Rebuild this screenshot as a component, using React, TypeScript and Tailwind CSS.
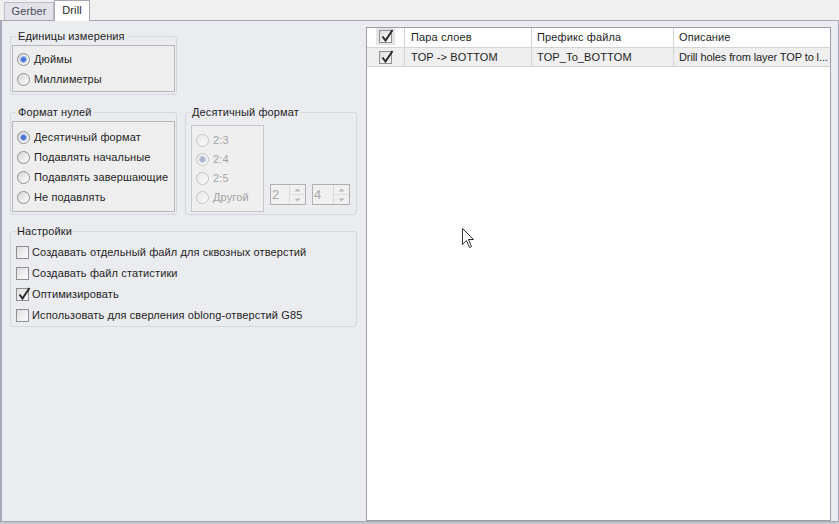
import React from "react";

function Radio({ checked, disabled, label, h }: { checked?: boolean; disabled?: boolean; label: string; h: string }) {
  return (
    <div className={`flex items-center ${h}`}>
      <div
        className={`w-[13px] h-[13px] rounded-full border flex items-center justify-center ${
          disabled
            ? "border-[#c4c4c4] bg-gradient-to-br from-[#e8e8e8] to-[#fbfbfb]"
            : "border-[#8e8f94] bg-gradient-to-br from-[#d6d6d6] to-[#ffffff]"
        }`}
      >
        {checked && (
          <div
            className={`w-[7px] h-[7px] rounded-full ${
              disabled ? "bg-[#a9b4d0] border border-[#c6cde0]" : "bg-[#4a72d4] border border-[#a8bdee]"
            }`}
          />
        )}
      </div>
      <span className={`ml-[4px] ${disabled ? "text-[#a3a3a3]" : "text-[#1e1e1e]"}`}>{label}</span>
    </div>
  );
}

function Check({ checked }: { checked?: boolean }) {
  return (
    <div className="relative w-[13px] h-[13px] border border-[#8e8f94] bg-gradient-to-br from-[#dcdcdc] to-[#ffffff] flex-none">
      {checked && (
        <svg className="absolute left-[1px] top-[-2px]" width="13" height="14" viewBox="0 0 13 14">
          <path d="M1.5 7.5 L4.5 11.5 L11.5 1" fill="none" stroke="#2a2a2a" strokeWidth="2" />
        </svg>
      )}
    </div>
  );
}

function CheckRow({ checked, label }: { checked?: boolean; label: string }) {
  return (
    <div className="flex items-center h-[21px]">
      <Check checked={checked} />
      <span className="ml-[3px]">{label}</span>
    </div>
  );
}

function Spinner({ value, w }: { value: string; w: string }) {
  return (
    <div className={`flex ${w} h-[21px] border border-[#b0b0b0] bg-[#f0f0f0]`}>
      <div className="flex-1 pl-[1px] flex items-center text-[13px] text-[#a8a8a8]">{value}</div>
      <div className="w-[16px] flex flex-col border-l border-[#dadada]">
        <div className="flex-1 flex items-center justify-center border-b border-[#dadada]">
          <svg width="7" height="4" viewBox="0 0 7 4">
            <path d="M0.5 3.5 L3.5 0.5 L6.5 3.5 Z" fill="#b8b8b8" />
          </svg>
        </div>
        <div className="flex-1 flex items-center justify-center">
          <svg width="7" height="4" viewBox="0 0 7 4">
            <path d="M0.5 0.5 L3.5 3.5 L6.5 0.5 Z" fill="#b8b8b8" />
          </svg>
        </div>
      </div>
    </div>
  );
}

export default function App() {
  return (
    <div className="w-[839px] h-[524px] bg-[#f0f0f0] text-[11px] leading-[13px] tracking-[0.12px] text-[#1e1e1e] font-['Liberation_Sans',Arial,sans-serif] overflow-hidden">
      <div className="h-[20px] flex items-end pl-[4px]">
        <div className="h-[18px] w-[50px] border border-b-0 border-[#bcbcc6] bg-[#e2e2e8] text-[#4c4c5c] flex items-center justify-center">
          Gerber
        </div>
        <div className="relative z-10 h-[21px] -mb-px w-[36px] border border-b-0 border-[#a6a6b4] bg-white flex items-center justify-center pb-[2px]">
          Drill
        </div>
      </div>
      <div className="h-[502px] border border-l-2 border-[#a7a7b5] bg-[#ebecf0] flex">
        <div className="w-[356px] flex-none pl-[8px] pt-[9px]">
          <fieldset className="w-[167px] h-[65px] border border-[#d3d7de] rounded-[3px] px-[1px] pb-[2px]">
            <legend className="ml-[4px] px-[2px] leading-[13px]">Единицы измерения</legend>
            <div className="mt-[2px] h-[47px] border border-[#b7b7bb] bg-[#eeeeef] pl-[4px] pt-[3px]">
              <Radio checked label="Дюймы" h="h-[20px]" />
              <Radio label="Миллиметры" h="h-[20px]" />
            </div>
          </fieldset>
          <div className="flex mt-[11px]">
            <fieldset className="w-[167px] h-[109px] border border-[#d3d7de] rounded-[3px] px-[1px]">
              <legend className="ml-[4px] px-[2px] leading-[13px]">Формат нулей</legend>
              <div className="mt-[2px] h-[91px] border border-[#b7b7bb] bg-[#eeeeef] pl-[4px] pt-[5px]">
                <Radio checked label="Десятичный формат" h="h-[20px]" />
                <Radio label="Подавлять начальные" h="h-[20px]" />
                <Radio label="Подавлять завершающие" h="h-[20px]" />
                <Radio label="Не подавлять" h="h-[20px]" />
              </div>
            </fieldset>
            <fieldset className="ml-[8px] w-[172px] h-[109px] border border-[#d3d7de] rounded-[3px] pl-[5px]">
              <legend className="ml-0 px-[1px] leading-[13px]">Десятичный формат</legend>
              <div className="flex items-start">
                <div className="mt-[6px] w-[73px] h-[87px] border border-[#c8c8cc] bg-[#efeff0] pl-[4px] pt-[5px]">
                  <Radio disabled label="2:3" h="h-[19px]" />
                  <Radio disabled checked label="2:4" h="h-[19px]" />
                  <Radio disabled label="2:5" h="h-[19px]" />
                  <Radio disabled label="Другой" h="h-[19px]" />
                </div>
                <div className="ml-[6px] mt-[65px] flex gap-[6px]">
                  <Spinner value="2" w="w-[36px]" />
                  <Spinner value="4" w="w-[38px]" />
                </div>
              </div>
            </fieldset>
          </div>
          <fieldset className="mt-[10px] w-[347px] h-[102px] border border-[#d3d7de] rounded-[3px] pl-[5px]">
            <legend className="ml-0 px-[1px] leading-[13px]">Настройки</legend>
            <div className="pt-[4px]">
              <CheckRow label="Создавать отдельный файл для сквозных отверстий" />
              <CheckRow label="Создавать файл статистики" />
              <CheckRow checked label="Оптимизировать" />
              <CheckRow label="Использовать для сверления oblong-отверстий G85" />
            </div>
          </fieldset>
        </div>
        <div className="relative ml-[8px] mt-[6px] w-[465px] h-[494px] border border-[#9e9ea9] bg-white">
          <div className="flex h-[20px] border-b border-[#d4d4d4] bg-white">
            <div className="w-[38px] border-r border-[#d4d4d4] flex items-center justify-center">
              <div className="w-[19px] h-[17px] bg-[#e4e4e4] flex items-center justify-center -mt-[2px]">
                <Check checked />
              </div>
            </div>
            <div className="w-[127px] border-r border-[#d4d4d4] flex items-center pl-[6px]">Пара слоев</div>
            <div className="w-[142px] border-r border-[#d4d4d4] flex items-center pl-[5px]">Префикс файла</div>
            <div className="flex-1 flex items-center pl-[5px]">Описание</div>
          </div>
          <div className="flex h-[19px] border-b border-[#d4d4d4] bg-[#efefef]">
            <div className="w-[38px] border-r border-[#d4d4d4] flex items-center justify-center">
              <Check checked />
            </div>
            <div className="w-[127px] border-r border-[#d4d4d4] flex items-center pl-[6px]">TOP -&gt; BOTTOM</div>
            <div className="w-[142px] border-r border-[#d4d4d4] flex items-center pl-[5px]">TOP_To_BOTTOM</div>
            <div className="flex-1 flex items-center pl-[5px] whitespace-nowrap tracking-[-0.1px]">
              Drill holes from layer TOP to l...
            </div>
          </div>
          <svg className="absolute left-[95px] top-[200px]" width="14" height="21" viewBox="0 0 14 21">
            <path d="M0.5 0.5 L0.5 16.5 L4.5 12.5 L7.5 19.5 L9.5 18.5 L6.5 11.5 L11.5 11.5 Z" fill="#ffffff" stroke="#333333" strokeWidth="1" />
          </svg>
        </div>
      </div>
      <div className="h-[2px] bg-[#c6c6ce]" />
    </div>
  );
}
